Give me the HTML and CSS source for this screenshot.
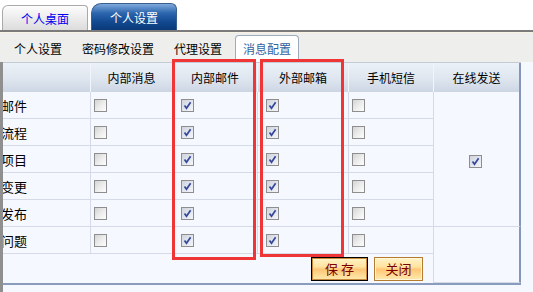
FILE: index.html
```html
<!DOCTYPE html>
<html lang="zh-CN">
<head>
    <meta charset="UTF-8">
    <title>消息配置</title>
    <link rel="stylesheet" href="styles.css">
</head>
<body>
    <div class="page">
        <div class="top-tabs">
            <div class="tab">个人桌面</div>
            <div class="tab active">个人设置</div>
        </div>

        <div class="sub-tabs">
            <span class="sub">个人设置</span>
            <span class="sub">密码修改设置</span>
            <span class="sub">代理设置</span>
            <span class="sub current">消息配置</span>
        </div>

        <div class="panel">
            <table class="grid">
                <colgroup>
                    <col style="width: 88px">
                    <col style="width: 82px">
                    <col style="width: 85px">
                    <col style="width: 91px">
                    <col style="width: 85px">
                    <col style="width: 87px">
                </colgroup>
                <thead>
                    <tr>
                        <th></th>
                        <th>内部消息</th>
                        <th>内部邮件</th>
                        <th>外部邮箱</th>
                        <th>手机短信</th>
                        <th class="last">在线发送</th>
                    </tr>
                </thead>
                <tbody id="rows"></tbody>
            </table>
        </div>

        <!-- 标注框 -->
        <div class="mark mark-a"></div>
        <div class="mark mark-b"></div>
    </div>

    <script>
        const items = ["邮件", "流程", "项目", "变更", "发布", "问题"];
        const tick = '<svg width="11" height="11" viewBox="0 0 11 11"><path d="M2.5 5.5 L4.5 8.3 L8.6 2.2" fill="none" stroke="#34489b" stroke-width="1.7"/></svg>';

        function box(checked) {
            return checked ? '<span class="cb on">' + tick + '</span>' : '<span class="cb"></span>';
        }

        let html = "";
        items.forEach(function(name, i) {
            html += "<tr>";
            html += '<td class="name"><span>' + name + "</span></td>";
            html += '<td class="c">' + box(false) + "</td>";
            html += '<td class="c wide">' + box(true) + "</td>";
            html += '<td class="c wide">' + box(true) + "</td>";
            html += '<td class="c">' + box(false) + "</td>";
            if (i === 0) html += '<td class="last online" rowspan="5">' + box(true) + "</td>";
            if (i === 5) html += '<td class="last" rowspan="2"></td>';
            html += "</tr>";
        });
        html += '<tr class="btn-row"><td colspan="5"><button class="btn save">保 存</button><button class="btn">关闭</button></td></tr>';
        document.getElementById("rows").innerHTML = html;
    </script>
</body>
</html>
```

FILE: styles.css
```css
* {
    box-sizing: border-box;
}

body {
    margin: 0;
    background: #f5f8fe;
    font-family: "Noto Sans CJK SC", "Liberation Sans", sans-serif;
    font-size: 12px;
    color: #000;
}

.page {
    position: relative;
    width: 533px;
    height: 292px;
    overflow: hidden;
}

/* 顶部主标签 */
.top-tabs {
    display: flex;
    align-items: flex-end;
    height: 32px;
    padding-left: 2px;
    background: #fff;
    border-bottom: 2px solid #7b7b7b;
}

.tab {
    display: flex;
    align-items: center;
    justify-content: center;
    width: 86px;
    height: 25px;
    border: 1px solid #a9a9a9;
    border-bottom: none;
    border-radius: 6px 4px 0 0;
    background: linear-gradient(#fdfdfd, #e9e9e9 60%, #dcdcdc);
    color: #0000f0;
}

.tab.active {
    margin-left: 3px;
    height: 27px;
    border-color: #3a5f8f;
    border-radius: 10px 6px 0 0;
    background: linear-gradient(#7fa9dc, #2c66ad 35%, #114890 70%, #0b3a78);
    color: #fff;
}

/* 子标签 */
.sub-tabs {
    display: flex;
    align-items: flex-end;
    height: 30px;
    padding-left: 4px;
    background: #eeeeec;
    border-top: 1px solid #f7f2e3;
}

.sub {
    height: 27px;
    line-height: 27px;
    padding: 0 10px;
}

.sub.current {
    margin-left: 3px;
    padding: 0 7px;
    line-height: 25px;
    background: #fff;
    border: 1px solid #9cacbc;
    border-bottom: none;
    border-radius: 4px 4px 0 0;
    color: #2f62a0;
}

/* 表格 */
.panel {
    height: 230px;
    border-left: 3px solid #8f8f8f;
    overflow: hidden;
}

.grid {
    table-layout: fixed;
    width: 518px;
    border-collapse: separate;
    border-spacing: 0;
    border-top: 1px solid #c3cbd6;
    border-bottom: 2px solid #8a9cbd;
}

.grid th {
    height: 29px;
    padding: 0;
    font-weight: normal;
    text-align: center;
    background: linear-gradient(#ebf1f7, #e0e7f0 50%, #ccd6e3);
    border-right: 1px solid #f2f5f9;
}

.grid th.last,
.grid td.last {
    border-right: 2px solid #8497b8;
}

.grid td {
    height: 27px;
    padding: 0;
    vertical-align: middle;
    border-right: 1px solid #d5dae8;
    border-bottom: 1px solid #d5dae8;
    background: #f5f8fe;
}

.grid td.name {
    font-size: 13px;
    white-space: nowrap;
}

.grid td.name span {
    margin-left: -2px;
}

.grid td.c {
    padding-left: 3px;
}

.grid td.wide {
    padding-left: 8px;
}

.grid td.online {
    text-align: center;
}

.grid td.online .cb {
    display: inline-block;
    vertical-align: middle;
    margin-left: -3px;
}

.btn-row td {
    height: 29px;
    border-bottom: none;
    text-align: right;
    padding-right: 10px;
}

.btn-row td.last {
    border-bottom: none;
}

/* 复选框 */
.cb {
    display: block;
    width: 13px;
    height: 13px;
    border: 1px solid #8e8e8e;
    background: linear-gradient(135deg, #d4d4d4, #eeeeee 55%, #fdfdfd);
}

.cb.on {
    background: linear-gradient(135deg, #cfd3dc, #e4e7ee 55%, #f4f5f8);
}

.cb svg {
    display: block;
}

/* 按钮 */
.btn {
    height: 24px;
    margin-left: 6px;
    padding: 0;
    font-family: "Noto Sans CJK SC", sans-serif;
    font-size: 13px;
    color: #7a0000;
    vertical-align: middle;
    border: 1px solid #b57b31;
    box-shadow: inset 0 0 0 1px #fff6dc;
    background: linear-gradient(#fff4c8, #ffe3a0 40%, #ffc676 52%, #ffdd98 80%, #ffeab0);
    width: 49px;
}

.btn.save {
    width: 57px;
    border-color: #000;
    box-shadow: inset 0 0 0 1px #c8893a;
}

/* 红色标注框 */
.mark {
    position: absolute;
    top: 59px;
    border: 3px solid #ef3535;
}

.mark-a {
    left: 172px;
    width: 84px;
    height: 201px;
}

.mark-b {
    left: 260px;
    width: 84px;
    height: 198px;
}
```
